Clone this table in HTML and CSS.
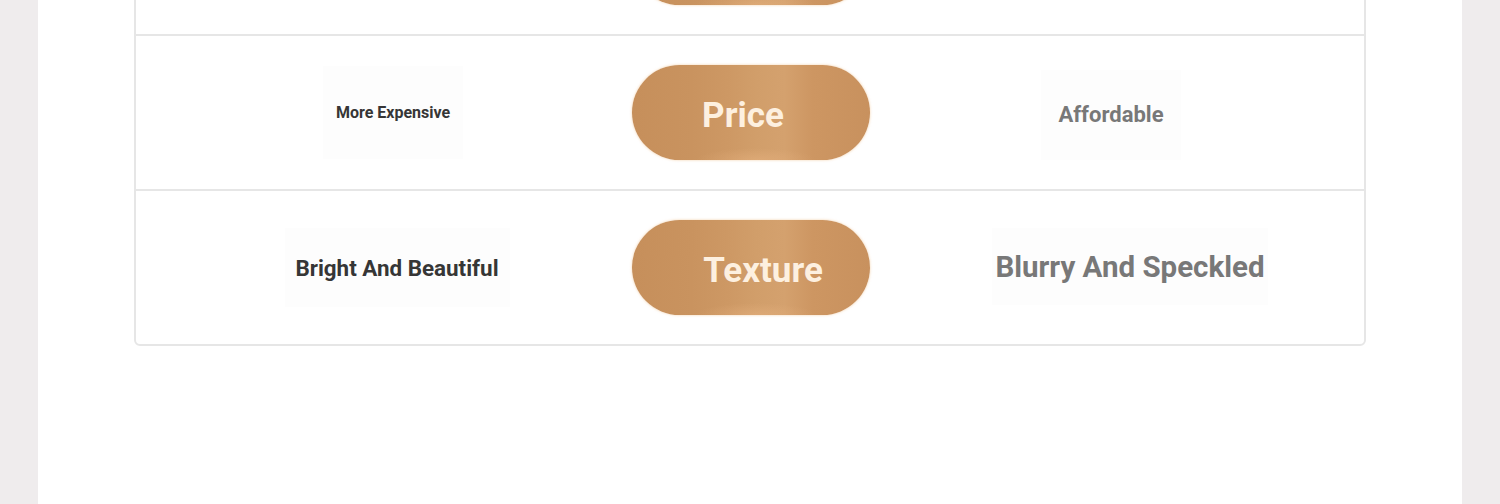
FILE: index.html
```html
<!DOCTYPE html>
<html>
<head>
<meta charset="utf-8">
<link rel="stylesheet" href="styles.css">
</head>
<body>
<div class="page">
  <div class="panel">
    <div class="table">
      <div class="row">
        <div class="cell left"></div>
        <div class="cell mid"><div class="pill"></div></div>
        <div class="cell right"></div>
      </div>
      <div class="row">
        <div class="cell left"><span class="tag t-sm box1">More Expensive</span></div>
        <div class="cell mid"><div class="pill"><span class="p1">Price</span></div></div>
        <div class="cell right"><span class="tag grey t-md box2">Affordable</span></div>
      </div>
      <div class="row last">
        <div class="cell left"><span class="tag t-md box3">Bright And Beautiful</span></div>
        <div class="cell mid"><div class="pill"><span class="p2">Texture</span></div></div>
        <div class="cell right"><span class="tag grey t-lg box4">Blurry And Speckled</span></div>
      </div>
    </div>
  </div>
</div>
</body>
</html>
```
FILE: styles.css
```css
html, body {
  margin: 0;
  padding: 0;
  height: 100%;
  overflow: hidden;
}
body {
  background: #efeced;
  font-family: Roboto, "Liberation Sans", sans-serif;
}
.page {
  display: flex;
  justify-content: center;
  height: 100%;
}
.panel {
  width: 1424px;
  background: #ffffff;
  height: 100%;
  display: flex;
  justify-content: center;
}
.table {
  width: 1232px;
  box-sizing: border-box;
  margin-top: -121px;
  align-self: flex-start;
  border: 2px solid #e6e6e6;
  border-radius: 6px;
}
.row {
  display: grid;
  grid-template-columns: 472px 238px 1fr;
  padding-left: 24px;
  height: 153px;
  border-bottom: 2px solid #e6e6e6;
  align-items: center;
}
.row.last {
  border-bottom: none;
}
.cell {
  display: flex;
  justify-content: center;
  align-items: center;
}
.right {
  padding-left: 6px;
}
.tag {
  font-weight: 700;
  color: #363636;
  background: #fdfdfd;
  display: flex;
  align-items: center;
  justify-content: center;
}
.tag.grey {
  color: #787878;
}
.t-sm { font-size: 16px; }
.t-md { font-size: 22px; }
.t-lg { font-size: 29.5px; }
.box1 {
  width: 140px;
  height: 93px;
  margin-left: -6px;
}
.box2 {
  width: 140px;
  height: 90px;
  margin-top: 4px;
  margin-left: -18px;
}
.box3 {
  width: 225px;
  height: 79px;
  margin-left: 2px;
  font-size: 22.4px;
}
.box4 {
  width: 276px;
  height: 77px;
  margin-left: 20px;
  margin-top: -2px;
}
.pill {
  width: 238px;
  height: 95px;
  border-radius: 48px;
  background:
    radial-gradient(ellipse 60px 12px at 52% 100%, rgba(238,185,135,0.4), rgba(238,185,135,0) 100%),
    linear-gradient(90deg, #c68f5b 0%, #c9935f 25%, #cd9864 40%, #d19e6a 52%, #d4a16e 64%, #cd9662 76%, #c8915e 100%);
  box-shadow: 0 0 2px 1px rgba(245, 215, 180, 0.55);
  display: flex;
  align-items: center;
  justify-content: center;
}
.pill span {
  color: #fdf0e0;
  font-weight: 700;
  font-size: 35px;
  margin-top: 6px;
}
.pill .p1 {
  margin-left: -16px;
}
.pill .p2 {
  margin-left: 24px;
}
```
